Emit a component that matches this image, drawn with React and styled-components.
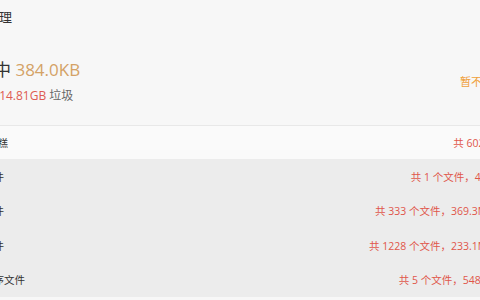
import React from "react";
import styled, { createGlobalStyle } from "styled-components";

const GlobalStyle = createGlobalStyle`
  html, body {
    margin: 0;
    padding: 0;
    background: #f7f7f7;
    overflow: hidden;
  }
  body {
    font-family: "Open Sans", "Noto Sans CJK SC", sans-serif;
    color: #333;
  }
`;

const Page = styled.div`
  margin-left: -40px;
  width: 560px;
  height: 300px;
  display: flex;
  flex-direction: column;
`;

const Title = styled.div`
  height: 32px;
  display: flex;
  align-items: center;
  font-size: 13px;
  color: #333;
  margin-bottom: 1px;
`;

const Summary = styled.div`
  height: 93px;
  display: flex;
  align-items: center;
  justify-content: space-between;
  padding: 0 16px 0 0;
  box-sizing: border-box;
  border-bottom: 1px solid #e8e8e8;
`;

const SummaryText = styled.div`
  display: flex;
  flex-direction: column;
  gap: 5px;
  padding-top: 4px;
`;

const BigLine = styled.div`
  font-size: 17px;
  line-height: 24px;
  color: #333;
`;

const SmallLine = styled.div`
  font-size: 12px;
  line-height: 18px;
  color: #666;
`;

const Amount = styled.span`
  color: ${(p) => p.$color};
`;

const SkipButton = styled.button`
  border: none;
  background: transparent;
  padding: 0;
  margin-top: 4px;
  font-family: inherit;
  font-size: 11px;
  color: #f0a13c;
  cursor: pointer;
`;

const HeadRow = styled.div`
  height: 33px;
  display: flex;
  align-items: center;
  justify-content: space-between;
  padding: 0 26px 0 6px;
  background: #fafafa;
  font-size: 10.5px;
`;

const Group = styled.div`
  background: #ececec;
  display: flex;
  flex-direction: column;
`;

const Row = styled.div`
  height: 34.5px;
  display: flex;
  align-items: center;
  justify-content: space-between;
  padding: 0 26px 0 2px;
  font-size: 10.5px;
`;

const Label = styled.span`
  color: #333;
`;

const Count = styled.span`
  color: #e0564a;
`;

const rows = [
  { label: "日志文件", count: "共 1 个文件，4KB" },
  { label: "临时文件", count: "共 333 个文件，369.3MB" },
  { label: "缓存文件", count: "共 1228 个文件，233.1MB" },
  { label: "安装程序文件", count: "共 5 个文件，548KB" },
];

export default function App() {
  return (
    <>
      <GlobalStyle />
      <Page>
        <Title>垃圾清理</Title>
        <Summary>
          <SummaryText>
            <BigLine>
              已选中 <Amount $color="#d4a266">384.0KB</Amount>
            </BigLine>
            <SmallLine>
              已发现 <Amount $color="#de5b52">14.81GB</Amount> 垃圾
            </SmallLine>
          </SummaryText>
          <SkipButton>暂不清理</SkipButton>
        </Summary>
        <HeadRow>
          <Label>美味蛋糕</Label>
          <Count>共 602 B</Count>
        </HeadRow>
        <Group>
          {rows.map((r) => (
            <Row key={r.label}>
              <Label>{r.label}</Label>
              <Count>{r.count}</Count>
            </Row>
          ))}
        </Group>
      </Page>
    </>
  );
}
